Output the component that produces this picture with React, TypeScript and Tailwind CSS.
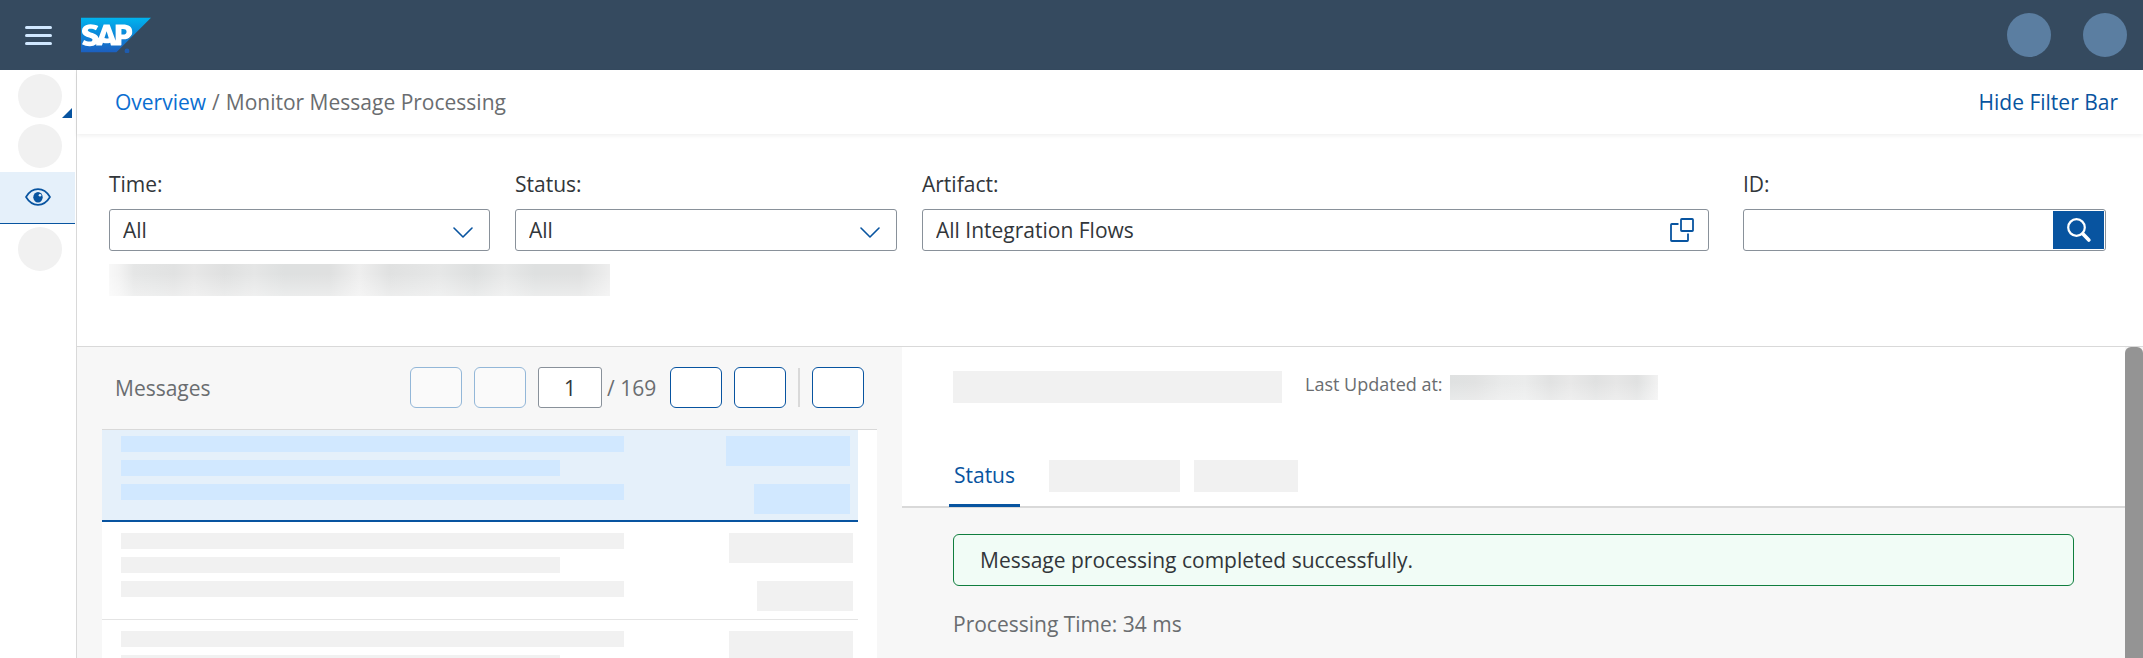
import React from "react";
import { SiSap } from "react-icons/si";

function SapLogo() {
  return (
    <svg viewBox="0 0 70 36" className="h-9 w-[70px]" role="img" aria-label="SAP">
      <defs>
        <linearGradient id="sapGradient" x1="0" y1="0" x2="0" y2="1">
          <stop offset="0" stopColor="#00b4ee" />
          <stop offset="0.5" stopColor="#0c86d8" />
          <stop offset="1" stopColor="#1d5fbf" />
        </linearGradient>
      </defs>
      <polygon points="1,5 53,5 53,16 38,31 1,31" fill="#ffffff" />
      <SiSap x={0} y={-17} size={70} fill="url(#sapGradient)" stroke="none" />
      <circle cx="46" cy="34" r="2.400" fill="#1f5cae" />
    </svg>
  );
}

function EyeIcon() {
  return (
    <svg viewBox="0 0 26 18" className="h-[18px] w-[26px]" aria-hidden="true">
      <path
        d="M1 9C4 4 8.3 1.2 13 1.2S22 4 25 9c-3 5-7.300 7.800-12 7.800S4 14 1 9Z"
        fill="none"
        stroke="#0854a0"
        strokeWidth="1.700"
        strokeLinejoin="round"
      />
      <ellipse cx="13" cy="9.300" rx="4.700" ry="5.300" fill="#0854a0" />
      <circle cx="15" cy="7.200" r="1.300" fill="#e5f0fa" />
    </svg>
  );
}

function ChevronIcon() {
  return (
    <svg
      viewBox="0 0 20 11"
      className="pointer-events-none absolute top-[18px] right-[17px] h-[11px] w-5"
      aria-hidden="true"
    >
      <path
        d="M1 1l9 9 9-9"
        fill="none"
        stroke="#0854a0"
        strokeWidth="1.600"
        strokeLinecap="round"
        strokeLinejoin="round"
      />
    </svg>
  );
}

function ValueHelpIcon() {
  return (
    <svg viewBox="0 0 24 24" className="size-6" aria-hidden="true">
      <g fill="none" stroke="#0854a0" strokeWidth="1.800" strokeLinejoin="round">
        <rect x="11" y="1" width="12" height="12" rx="0.800" />
        <path d="M8.500 6H1.800a.8.800 0 0 0-.8.800V22.200a.8.800 0 0 0 .8.800H17.200a.8.800 0 0 0 .8-.8V15.500" />
      </g>
    </svg>
  );
}

function SearchIcon() {
  return (
    <svg viewBox="0 0 24 24" className="size-6" aria-hidden="true">
      <circle cx="9.500" cy="9.500" r="8.300" fill="none" stroke="#fff" strokeWidth="2.200" />
      <path d="M15.800 15.800l6 6.200" stroke="#fff" strokeWidth="3.600" strokeLinecap="round" />
    </svg>
  );
}

const fieldBox = "h-[42px] w-full rounded-[3px] border border-[#89919a] bg-white";

function FilterSelect({ id, label }: { id: string; label: string }) {
  return (
    <div>
      <label htmlFor={id} className="block">
        {label}
      </label>
      <div className="relative mt-[11px]">
        <select id={id} className={`${fieldBox} block appearance-none pl-[13px]`}>
          <option>All</option>
        </select>
        <ChevronIcon />
      </div>
    </div>
  );
}

function MessageRow({ selected = false }: { selected?: boolean }) {
  const fill = selected ? "bg-[#d1e8ff]" : "bg-[#f1f1f1]";
  return (
    <li
      className={
        selected
          ? "flex h-[92px] shrink-0 justify-between border-b-2 border-[#0854a0] bg-[#e5f0fa] pt-1.5 pr-2 pl-[19px]"
          : "flex h-[98px] shrink-0 justify-between border-b border-[#e4e4e4] bg-white pt-[11px] pr-[5px] pl-[19px]"
      }
    >
      <div className="flex w-[503px] flex-col gap-2">
        <div className={`h-4 ${fill}`} />
        <div className={`h-4 w-[439px] ${fill}`} />
        <div className={`h-4 ${fill}`} />
      </div>
      <div className="flex flex-col items-end gap-[18px]">
        <div className={`h-[30px] w-[124px] ${fill}`} />
        <div className={`h-[30px] w-24 ${fill}`} />
      </div>
    </li>
  );
}

function PagerButton({ label, disabled = false }: { label: string; disabled?: boolean }) {
  return (
    <button
      type="button"
      aria-label={label}
      disabled={disabled}
      className={
        disabled
          ? "h-[41px] w-[52px] rounded-md border border-[#93b7d8] bg-[#fafafa]"
          : "h-[41px] w-[52px] rounded-md border border-[#0854a0] bg-white"
      }
    />
  );
}

export default function App() {
  return (
    <div className="flex h-screen flex-col overflow-hidden bg-white font-['Open_Sans',sans-serif] text-[21px] leading-7 text-[#32363a]">
      <header className="flex h-[70px] shrink-0 items-center bg-[#354a5f] pr-4 pl-[25px]">
        <button type="button" aria-label="Menu" className="mr-[29px] flex w-[27px] flex-col gap-[5px]">
          <span className="h-[3px] rounded-full bg-[#d1e8ff]" />
          <span className="h-[3px] rounded-full bg-[#d1e8ff]" />
          <span className="h-[3px] rounded-full bg-[#d1e8ff]" />
        </button>
        <SapLogo />
        <div className="ml-auto flex gap-8">
          <span className="size-11 rounded-full bg-[#5b7ea1]" />
          <span className="size-11 rounded-full bg-[#5b7ea1]" />
        </div>
      </header>

      <div className="flex min-h-0 flex-1">
        <nav className="flex w-[77px] shrink-0 flex-col border-r border-[#d9d9d9] pt-1">
          <div className="relative pl-[18px]">
            <div className="size-11 rounded-full bg-[#f1f1f1]" />
            <svg viewBox="0 0 10 10" className="absolute right-1 bottom-0 size-2.5" aria-hidden="true">
              <path d="M10 0v10H0z" fill="#0854a0" />
            </svg>
          </div>
          <div className="mt-1.5 ml-[18px] size-11 rounded-full bg-[#f1f1f1]" />
          <a
            href="#monitor"
            aria-label="Monitor"
            className="mt-1 mr-px flex h-[52px] items-center justify-center border-b border-[#0854a0] bg-[#e5f0fa] pb-0.5"
          >
            <EyeIcon />
          </a>
          <div className="mt-[3px] ml-[18px] size-11 rounded-full bg-[#f1f1f1]" />
        </nav>

        <main className="flex min-w-0 flex-1 flex-col">
          <div className="flex h-16 shrink-0 items-center justify-between pr-[25px] pl-[38px] shadow-[0_2px_4px_rgba(0,0,0,0.06)]">
            <nav aria-label="Breadcrumb" className="flex gap-1.5 text-[#6a6d70]">
              <a href="#overview" className="text-[#0a6ed1]">
                Overview
              </a>
              <span>/</span>
              <span>Monitor Message Processing</span>
            </nav>
            <button type="button" className="text-[#0854a0]">
              Hide Filter Bar
            </button>
          </div>

          <section className="shrink-0 border-b border-[#d9d9d9] pt-9 pr-[37px] pb-[50px] pl-8">
            <div className="grid grid-cols-[381fr_382fr_787fr_372fr] gap-x-[25px]">
              <FilterSelect id="time" label="Time:" />
              <FilterSelect id="status" label="Status:" />
              <div>
                <label htmlFor="artifact" className="block">
                  Artifact:
                </label>
                <div className="relative mt-[11px]">
                  <input
                    id="artifact"
                    defaultValue="All Integration Flows"
                    className={`${fieldBox} block pr-12 pl-[13px]`}
                  />
                  <button type="button" aria-label="Select artifact" className="absolute top-[9px] right-[15px]">
                    <ValueHelpIcon />
                  </button>
                </div>
              </div>
              <div className="pl-[9px]">
                <label htmlFor="message-id" className="block">
                  ID:
                </label>
                <div className="mt-[11px] flex h-[42px] rounded-[3px] border border-[#89919a] bg-white p-px">
                  <input id="message-id" className="min-w-0 flex-1 px-3" />
                  <button
                    type="button"
                    aria-label="Search"
                    className="flex w-[51px] items-center justify-center bg-[#0854a0]"
                  >
                    <SearchIcon />
                  </button>
                </div>
              </div>
            </div>
            <div className="mt-[13px] h-8 w-[501px] bg-[linear-gradient(180deg,rgba(255,255,255,0)_30%,rgba(255,255,255,0.4)_100%),linear-gradient(90deg,#f8f8f8_0%,#f3f3f3_2%,#e5e6e6_5%,#e1e2e2_13%,#e7e7e7_17%,#dfe0e0_23%,#e5e6e6_29%,#dee0e0_35%,#dfe0e0_44%,#eeeeee_50%,#e0e1e1_56%,#e6e7e7_66%,#dddfdf_73%,#e7e8e8_79%,#dee0e0_85%,#dfe0e0_94%,#eeeeee_100%)]" />
          </section>

          <div className="grid min-h-0 flex-1 grid-cols-[825fr_1241fr] bg-[#f7f7f7]">
            <section className="flex min-h-0 min-w-0 flex-col px-[25px]">
              <div className="flex h-[83px] shrink-0 items-center border-b border-[#d9d9d9] pr-[13px] pb-px pl-[13px]">
                <h2 className="text-[#6a6d70]">Messages</h2>
                <div className="ml-auto flex items-center gap-3">
                  <PagerButton label="First page" disabled />
                  <PagerButton label="Previous page" disabled />
                  <div className="flex items-center gap-[5px] text-[#6a6d70]">
                    <input
                      aria-label="Page"
                      defaultValue="1"
                      className="h-[41px] w-16 rounded-[3px] border border-[#89919a] bg-white text-center text-[#32363a]"
                    />
                    <span className="min-w-[51px]">/ 169</span>
                  </div>
                  <PagerButton label="Next page" />
                  <PagerButton label="Last page" />
                  <span className="h-[39px] w-0.5 bg-[#d9d9d9]" />
                  <PagerButton label="Refresh" />
                </div>
              </div>
              <ul className="flex min-h-0 flex-1 flex-col overflow-hidden bg-white pr-[19px]">
                <MessageRow selected />
                <MessageRow />
                <MessageRow />
              </ul>
            </section>

            <div className="flex min-h-0 min-w-0">
              <section className="min-w-0 flex-1">
                <div className="flex h-[161px] flex-col border-b-2 border-[#d9d9d9] bg-white pt-6 pl-[51px]">
                  <div className="flex h-8 items-center">
                    <div className="h-8 w-[329px] bg-[#f1f1f1]" />
                    <span className="ml-[23px] pb-1.5 text-lg text-[#6a6d70]">Last Updated at:</span>
                    <div className="ml-[7px] h-[25px] w-52 bg-[linear-gradient(180deg,rgba(255,255,255,0)_30%,rgba(255,255,255,0.3)_100%),linear-gradient(90deg,#dfe1e1_0%,#e1e2e2_12%,#e9eaea_25%,#ebecec_36%,#e1e2e2_48%,#e8e8e8_58%,#e0e1e1_70%,#e6e6e6_80%,#e0e1e1_90%,#f2f2f2_100%)]" />
                  </div>
                  <div role="tablist" className="mt-auto -ml-1 flex">
                    <button
                      type="button"
                      role="tab"
                      aria-selected="true"
                      className="-mb-px h-[47px] w-[71px] rounded-t-sm border-b-3 border-[#0854a0] pb-[15px] text-center text-[#0854a0]"
                    >
                      Status
                    </button>
                    <div className="ml-[29px] h-8 w-[131px] bg-[#f1f1f1]" />
                    <div className="ml-3.5 h-8 w-[104px] bg-[#f1f1f1]" />
                  </div>
                </div>
                <div className="px-[51px] pt-[26px]">
                  <div
                    role="status"
                    className="flex h-[52px] items-center rounded-md border border-[#107e3e] bg-[#f1fcf6] px-[26px]"
                  >
                    Message processing completed successfully.
                  </div>
                  <p className="mt-6 text-[#6a6d70]">Processing Time: 34 ms</p>
                </div>
              </section>
              <div className="w-[18px] shrink-0 rounded-t-md bg-[#949494]" />
            </div>
          </div>
        </main>
      </div>
    </div>
  );
}
